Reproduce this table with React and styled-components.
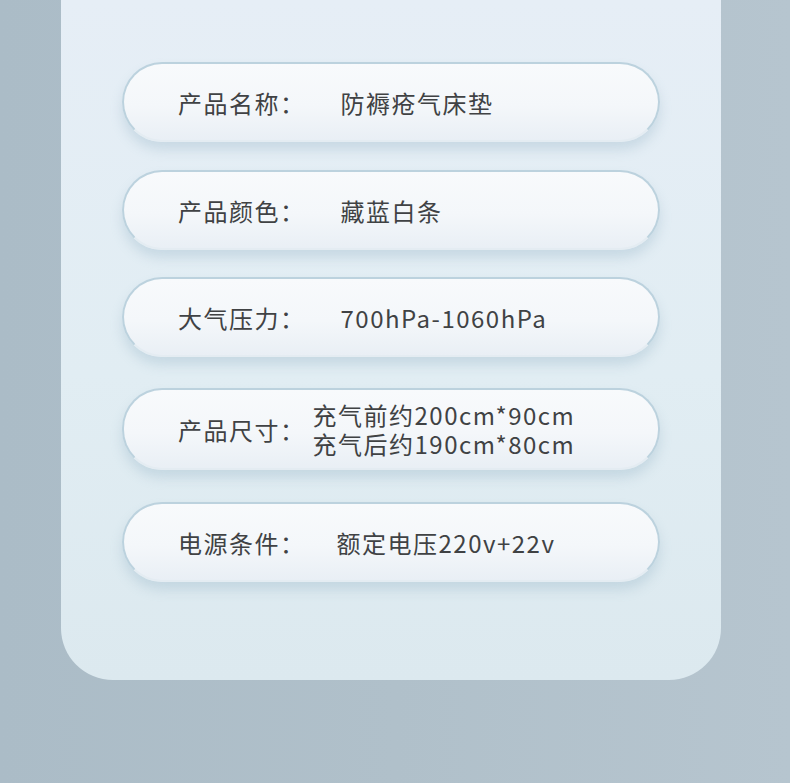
import styled, { createGlobalStyle } from "styled-components";

const GlobalStyle = createGlobalStyle`
  html, body {
    margin: 0;
    padding: 0;
    background: #aebfc9;
  }
  body {
    font-family: "Noto Sans CJK SC", "Noto Sans", sans-serif;
  }
`;

const Page = styled.div`
  width: 790px;
  height: 783px;
  background: linear-gradient(90deg, #abbcc7 0%, #b0c0ca 50%, #b6c5cf 100%);
  overflow: hidden;
`;

const Panel = styled.div`
  margin-left: 61px;
  width: 660px;
  height: 680px;
  box-sizing: border-box;
  padding-top: 62px;
  border-radius: 0 0 52px 52px;
  background: linear-gradient(180deg, #e6eef6 0%, #e1edf3 55%, #dce9ef 100%);
  display: flex;
  flex-direction: column;
  align-items: center;
`;

const Pill = styled.div`
  width: 538px;
  height: ${({ $h }) => $h || 80}px;
  margin-top: ${({ $mt }) => $mt || 0}px;
  box-sizing: border-box;
  border-radius: 40px;
  border: 2px solid #bcd2de;
  border-bottom-color: #e4ecf2;
  background: linear-gradient(180deg, #f8fafc 0%, #f4f7fa 55%, #e9eff5 100%);
  box-shadow: 0 8px 12px rgba(140, 172, 192, 0.3);
  display: flex;
  align-items: center;
  padding-left: 54px;
  color: #404244;
  font-size: 24px;
  letter-spacing: 1.5px;
`;

const Label = styled.div`
  flex: 0 0 auto;
  white-space: nowrap;
`;

const Value = styled.div`
  margin-left: ${({ $ml }) => $ml}px;
  white-space: nowrap;
  line-height: 29px;
`;

const rows = [
  { label: "产品名称：", value: ["防褥疮气床垫"], ml: 35, mt: 0 },
  { label: "产品颜色：", value: ["藏蓝白条"], ml: 35, mt: 28 },
  { label: "大气压力：", value: ["700hPa-1060hPa"], ml: 35, mt: 27 },
  { label: "产品尺寸：", value: ["充气前约200cm*90cm", "充气后约190cm*80cm"], ml: 7, mt: 31, h: 82 },
  { label: "电源条件：", value: ["额定电压220v+22v"], ml: 31, mt: 32 },
];

export default function App() {
  return (
    <Page>
      <GlobalStyle />
      <Panel>
        {rows.map((r) => (
          <Pill key={r.label} $mt={r.mt} $h={r.h}>
            <Label>{r.label}</Label>
            <Value $ml={r.ml}>
              {r.value.map((line) => (
                <div key={line}>{line}</div>
              ))}
            </Value>
          </Pill>
        ))}
      </Panel>
    </Page>
  );
}
